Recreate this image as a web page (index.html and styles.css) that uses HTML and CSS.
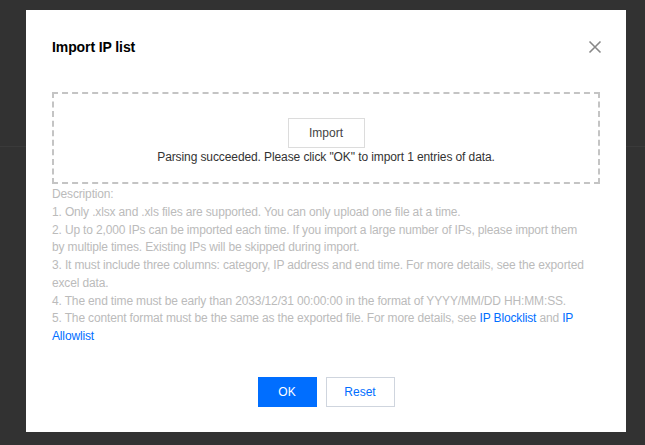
FILE: index.html
```html
<!DOCTYPE html>
<html lang="en">
<head>
<meta charset="utf-8">
<title>Import IP list</title>
<link rel="stylesheet" href="styles.css">
</head>
<body>
<div class="backdrop">
  <div class="page-line"></div>
  <div class="modal">
    <div class="modal-header">
      <h2 class="modal-title">Import IP list</h2>
      <button class="close" aria-label="Close">
        <svg width="14" height="14" viewBox="0 0 14 14"><path d="M1.5 1.5L12.5 12.5M12.5 1.5L1.5 12.5" stroke="#888" stroke-width="1.6" fill="none"/></svg>
      </button>
    </div>
    <div class="upload">
      <button class="btn-import">Import</button>
      <p class="status">Parsing succeeded. Please click "OK" to import 1 entries of data.</p>
    </div>
    <div class="desc">
      <p>Description:</p>
      <p>1. Only .xlsx and .xls files are supported. You can only upload one file at a time.</p>
      <p>2. Up to 2,000 IPs can be imported each time. If you import a large number of IPs, please import them by multiple times. Existing IPs will be skipped during import.</p>
      <p>3. It must include three columns: category, IP address and end time. For more details, see the exported excel data.</p>
      <p>4. The end time must be early than 2033/12/31 00:00:00 in the format of YYYY/MM/DD HH:MM:SS.</p>
      <p><span>5. The content format must be the same as the exported file. For more details, see</span> <a href="#">IP Blocklist</a> and <a href="#"><span>IP</span> <span>Allowlist</span></a></p>
    </div>
    <div class="footer">
      <button class="btn btn-primary">OK</button>
      <button class="btn btn-default">Reset</button>
    </div>
  </div>
</div>
</body>
</html>
```
FILE: styles.css
```css
* { box-sizing: border-box; }
html, body { margin: 0; padding: 0; }
body {
  font-family: "Segoe UI", "Liberation Sans", Arial, sans-serif;
  background: #313131;
  width: 645px;
  height: 445px;
  overflow: hidden;
}
.backdrop {
  position: relative;
  height: 445px;
  padding-top: 10px;
  background: #323232;
}
.page-line {
  position: absolute;
  left: 0;
  right: 0;
  top: 146px;
  height: 1px;
  background: #3a3a3a;
}
.modal {
  position: relative;
  width: 600px;
  margin-left: 26px;
  background: #fff;
  padding: 26px 26px 25px;
}
.modal-header {
  display: flex;
  justify-content: space-between;
  align-items: center;
  height: 22px;
}
.modal-title {
  margin: 0;
  font-size: 14px;
  line-height: 22px;
  font-weight: bold;
  color: #000;
  letter-spacing: -0.1px;
}
.close {
  border: 0;
  background: none;
  padding: 0;
  width: 14px;
  height: 14px;
  margin-right: -2px;
  display: flex;
}
.upload {
  margin-top: 34px;
  border: 2px dashed #c4c4c4;
  height: 92px;
  padding-top: 24px;
  display: flex;
  flex-direction: column;
  align-items: center;
}
.btn-import {
  width: 77px;
  height: 30px;
  border: 1px solid #dcdcdc;
  background: #fff;
  font: inherit;
  font-size: 12px;
  color: #444;
  padding: 0;
}
.status {
  margin: 0;
  font-size: 12px;
  line-height: 18px;
  color: #333;
  letter-spacing: -0.1px;
}
.desc {
  margin-top: 2px;
  padding-right: 12px;
  font-size: 12px;
  line-height: 17.75px;
  color: #bbb;
  letter-spacing: -0.15px;
}
.desc p { margin: 0; }
.desc a { color: #006eff; text-decoration: none; }
.footer {
  margin-top: 31px;
  display: flex;
  justify-content: center;
  gap: 9px;
}
.btn {
  height: 30px;
  font: inherit;
  font-size: 12px;
  padding: 0;
  border: 1px solid transparent;
}
.btn-primary {
  width: 59px;
  background: #006eff;
  border-color: #006eff;
  color: #fff;
}
.btn-default {
  width: 69px;
  background: #fff;
  border-color: #cfd5de;
  color: #006eff;
}
```
